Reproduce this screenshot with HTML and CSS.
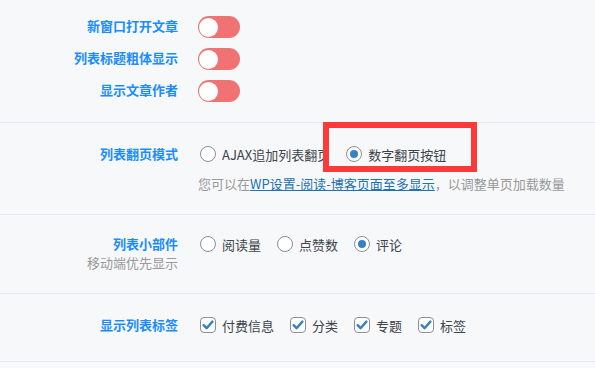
FILE: index.html
```html
<!DOCTYPE html>
<html lang="zh-CN">
<head>
    <meta charset="UTF-8">
    <meta name="viewport" content="width=device-width, initial-scale=1.0">
    <title>列表设置</title>
    <link rel="stylesheet" href="styles.css">
</head>
<body>
    <div class="settings">
        <div class="section section-toggles">
            <div class="row">
                <div class="label-col"><span class="label">新窗口打开文章</span></div>
                <div class="field-col"><span class="toggle"><span class="knob"></span></span></div>
            </div>
            <div class="row">
                <div class="label-col"><span class="label">列表标题粗体显示</span></div>
                <div class="field-col"><span class="toggle"><span class="knob"></span></span></div>
            </div>
            <div class="row">
                <div class="label-col"><span class="label">显示文章作者</span></div>
                <div class="field-col"><span class="toggle"><span class="knob"></span></span></div>
            </div>
        </div>

        <div class="section section-paging">
            <div class="row">
                <div class="label-col"><span class="label">列表翻页模式</span></div>
                <div class="field-col">
                    <div class="options">
                        <label class="option"><span class="radio"></span>AJAX追加列表翻页</label>
                        <label class="option option-top"><span class="radio checked"></span>数字翻页按钮</label>
                        <span class="highlight"></span>
                    </div>
                    <p class="hint">您可以在<a href="#">WP设置-阅读-博客页面至多显示</a>，以调整单页加载数量</p>
                </div>
            </div>
        </div>

        <div class="section section-widgets">
            <div class="row">
                <div class="label-col">
                    <span class="label">列表小部件</span>
                    <span class="sub-label">移动端优先显示</span>
                </div>
                <div class="field-col">
                    <div class="options">
                        <label class="option"><span class="radio"></span>阅读量</label>
                        <label class="option"><span class="radio"></span>点赞数</label>
                        <label class="option"><span class="radio checked"></span>评论</label>
                    </div>
                </div>
            </div>
        </div>

        <div class="section section-tags">
            <div class="row">
                <div class="label-col"><span class="label">显示列表标签</span></div>
                <div class="field-col">
                    <div class="options">
                        <label class="option"><svg class="checkbox" viewBox="0 0 16 16"><rect x="0.5" y="0.5" width="15" height="15" rx="3.5"/><path d="M3.6 8.2 L6.6 11.2 L12.4 4.6"/></svg>付费信息</label>
                        <label class="option"><svg class="checkbox" viewBox="0 0 16 16"><rect x="0.5" y="0.5" width="15" height="15" rx="3.5"/><path d="M3.6 8.2 L6.6 11.2 L12.4 4.6"/></svg>分类</label>
                        <label class="option"><svg class="checkbox" viewBox="0 0 16 16"><rect x="0.5" y="0.5" width="15" height="15" rx="3.5"/><path d="M3.6 8.2 L6.6 11.2 L12.4 4.6"/></svg>专题</label>
                        <label class="option"><svg class="checkbox" viewBox="0 0 16 16"><rect x="0.5" y="0.5" width="15" height="15" rx="3.5"/><path d="M3.6 8.2 L6.6 11.2 L12.4 4.6"/></svg>标签</label>
                    </div>
                </div>
            </div>
        </div>

        <div class="section section-next"></div>
    </div>
</body>
</html>
```

FILE: styles.css
```css
html, body {
    margin: 0;
    padding: 0;
    background: #f7f8fa;
}

body {
    font-family: "Noto Sans CJK SC", "Noto Sans", sans-serif;
    font-size: 13px;
    color: #3c434a;
    overflow: hidden;
}

.section {
    border-bottom: 1px solid #e8e9ec;
}

.section-toggles {
    padding: 11px 0 15px;
}

.section-toggles .row {
    height: 32px;
    align-items: center;
}

.section-toggles .label {
    margin-top: -2px;
}

.section-paging {
    padding: 19px 0 20px;
}

.section-widgets {
    padding: 19px 0 21px;
}

.section-tags {
    padding: 19px 0 24px;
}

.section-next {
    height: 20px;
    border-bottom: none;
}

.row {
    display: flex;
    gap: 20px;
}

.label-col {
    width: 178px;
    flex-shrink: 0;
    display: flex;
    flex-direction: column;
    align-items: flex-end;
}

.label {
    color: #1a8cff;
    font-weight: bold;
    line-height: 22px;
}

.section-paging .label,
.section-tags .label {
    line-height: 24px;
}

.section-widgets .label {
    line-height: 20px;
}

.sub-label {
    color: #999;
    line-height: 18px;
}

.field-col {
    display: flex;
    flex-direction: column;
}

/* toggle switch */
.toggle {
    display: block;
    width: 42px;
    height: 22px;
    border-radius: 11px;
    background: #f07272;
    position: relative;
}

.knob {
    position: absolute;
    left: 1px;
    top: 1.5px;
    width: 19px;
    height: 19px;
    border-radius: 50%;
    background: #fff;
}

.options {
    display: flex;
    align-items: center;
    height: 24px;
    position: relative;
}

.section-widgets .options {
    height: 20px;
}

.option {
    display: flex;
    align-items: center;
    margin-right: 14px;
    white-space: nowrap;
    color: #3c434a;
}

.radio {
    width: 14px;
    height: 14px;
    border: 1px solid #8c8f94;
    border-radius: 50%;
    background: #fff;
    margin: 0 6px 0 2px;
    position: relative;
    flex-shrink: 0;
}

.radio.checked::after {
    content: "";
    position: absolute;
    left: 3px;
    top: 3px;
    width: 8px;
    height: 8px;
    border-radius: 50%;
    background: #3582c4;
}

.checkbox {
    width: 16px;
    height: 16px;
    margin: 0 6px 0 2px;
    flex-shrink: 0;
}

.checkbox rect {
    fill: #fff;
    stroke: #8c8f94;
}

.checkbox path {
    fill: none;
    stroke: #3582c4;
    stroke-width: 2.4;
    stroke-linecap: round;
    stroke-linejoin: round;
}

.option-top {
    position: relative;
    z-index: 2;
}

/* red annotation box */
.highlight {
    position: absolute;
    left: 125px;
    top: -20px;
    width: 142px;
    height: 38px;
    border: 6px solid #fd3a3a;
    background: #f7f8fa;
    z-index: 1;
}

.hint {
    margin: 8px 0 0;
    line-height: 20px;
    color: #999;
}

.hint a {
    color: #2271b1;
    text-decoration: underline;
}
```
